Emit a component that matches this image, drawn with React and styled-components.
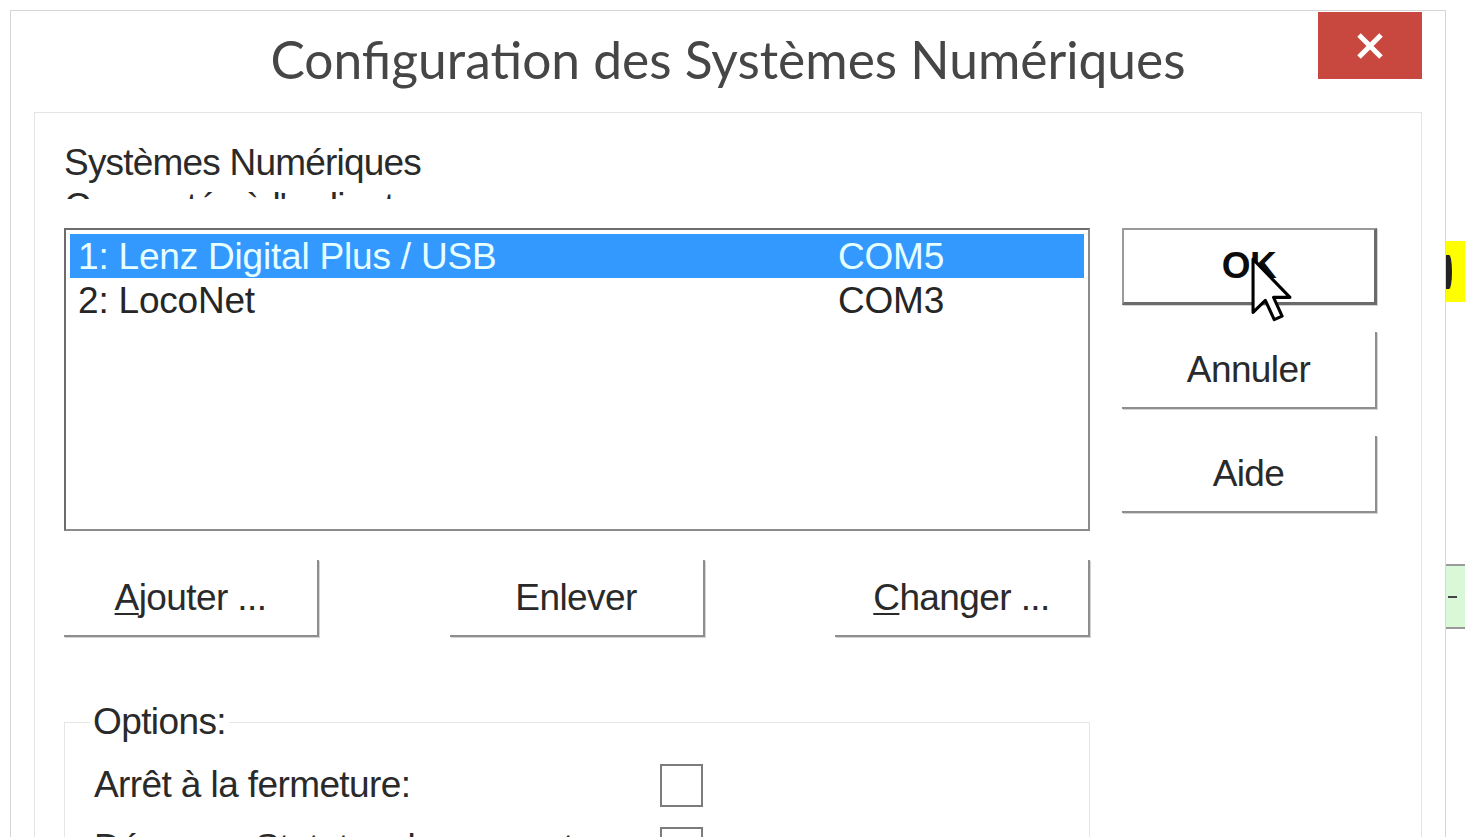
import React from 'react'
import styled, { createGlobalStyle } from 'styled-components'

const GlobalStyle = createGlobalStyle`
    html, body {
        margin: 0;
        padding: 0;
        background: #ffffff;
    }
    body {
        width: 1465px;
        height: 837px;
        overflow: hidden;
        font-family: "Liberation Sans", Arial, sans-serif;
        color: #1e1e1e;
    }
`

const rows = [
    { name: '1: Lenz Digital Plus / USB', port: 'COM5', selected: true },
    { name: '2: LocoNet', port: 'COM3' },
]

const options = [
    'Arrêt à la fermeture:',
    'Démarrer Statut au lancement:',
]

const App = () => {
    return (
        <Page>
            <GlobalStyle />
            <Window>
                <TitleBar>
                    <span />
                    <Title>Configuration des Systèmes Numériques</Title>
                    <CloseButton>
                        <svg width="28" height="26" viewBox="0 0 28 26">
                            <path d="M3 2 L25 24 M25 2 L3 24" stroke="#fff" strokeWidth="5" />
                        </svg>
                    </CloseButton>
                </TitleBar>

                <Panel>
                    <Caption>
                        Systèmes Numériques<br />
                        Connectés à l'ordinateur
                    </Caption>

                    <Body>
                        <div>
                            <ListBox>
                                {rows.map((r) => (
                                    <ListRow key={r.name} $selected={r.selected}>
                                        <span>{r.name}</span>
                                        <span>{r.port}</span>
                                    </ListRow>
                                ))}
                            </ListBox>

                            <ButtonRow>
                                <Button><u>A</u>jouter ...</Button>
                                <Button>Enlever</Button>
                                <Button><u>C</u>hanger ...</Button>
                            </ButtonRow>

                            <Group>
                                <Legend>Options:</Legend>
                                <OptionList>
                                    {options.map((o) => (
                                        <OptionRow key={o}>
                                            <span>{o}</span>
                                            <CheckBox />
                                        </OptionRow>
                                    ))}
                                </OptionList>
                            </Group>
                        </div>

                        <SideButtons>
                            <Button $default>OK</Button>
                            <Button>Annuler</Button>
                            <Button>Aide</Button>
                        </SideButtons>
                    </Body>
                </Panel>
            </Window>

            <Strip>
                <YellowTag><span /></YellowTag>
                <GreenTag><span /></GreenTag>
            </Strip>

            <Cursor width="41" height="65" viewBox="0 0 12 19">
                <path
                    d="M0.6 0.6 L0.6 16.2 L4.2 12.7 L6.8 18.3 L9.1 17.3 L6.6 11.8 L11.4 11.8 Z"
                    fill="#fff"
                    stroke="#000"
                    strokeWidth="0.9"
                    strokeLinejoin="round"
                />
            </Cursor>
        </Page>
    )
}

export default App

const Page = styled.div`
    position: relative;
    display: flex;
    align-items: flex-start;
    width: 1465px;
    height: 837px;
    padding: 10px 0 0 10px;
    box-sizing: border-box;
    overflow: hidden;
`

const Window = styled.div`
    flex-shrink: 0;
    width: 1436px;
    height: 900px;
    border: 1px solid #d6d6d6;
    box-sizing: border-box;
    background: #fff;
    display: flex;
    flex-direction: column;
`

const TitleBar = styled.div`
    display: grid;
    grid-template-columns: 1fr auto 1fr;
    height: 101px;
    padding: 0 23px;
    flex-shrink: 0;
`

const Title = styled.div`
    margin-top: 18px;
    font-family: Lato, "Open Sans", sans-serif;
    font-size: 51.5px;
    line-height: 60px;
    color: #464646;
    white-space: nowrap;
`

const CloseButton = styled.div`
    justify-self: end;
    margin-top: 1px;
    width: 104px;
    height: 67px;
    background: #c8473f;
    display: flex;
    align-items: center;
    justify-content: center;
`

const Panel = styled.div`
    flex: 1;
    margin: 0 23px;
    border: 1px solid #e4e4e4;
    border-bottom: none;
    padding: 28px 44px 0 29px;
`

const Caption = styled.div`
    height: 58px;
    overflow: hidden;
    font-size: 37px;
    line-height: 44px;
    letter-spacing: -0.8px;
    color: #2a2a2a;
`

const Body = styled.div`
    display: grid;
    grid-template-columns: 1026px 255px;
    column-gap: 32px;
    margin-top: 29px;
    align-items: start;
`

const ListBox = styled.div`
    height: 303px;
    box-sizing: border-box;
    border: 2px solid #8c8c8c;
    border-top-color: #6c6c6c;
    border-left-color: #6c6c6c;
    padding: 4px;
`

const ListRow = styled.div`
    display: grid;
    grid-template-columns: 760px 1fr;
    height: 44px;
    padding-left: 8px;
    font-size: 37px;
    line-height: 46px;
    letter-spacing: -0.2px;
    white-space: nowrap;
    background: ${(p) => (p.$selected ? '#3399ff' : 'transparent')};
    color: ${(p) => (p.$selected ? '#e6ffff' : '#262626')};
`

const ButtonRow = styled.div`
    display: flex;
    justify-content: space-between;
    margin-top: 29px;
`

const Button = styled.div`
    width: 255px;
    height: 77px;
    box-sizing: border-box;
    display: flex;
    align-items: center;
    justify-content: center;
    font-size: 37px;
    letter-spacing: -0.6px;
    color: ${(p) => (p.$default ? '#0c0c0c' : '#2a2a2a')};
    font-weight: ${(p) => (p.$default ? 700 : 400)};
    border-style: solid;
    border-color: ${(p) => (p.$default ? '#9a9a9a #6a6a6a #6a6a6a #9a9a9a' : 'transparent #8e8e8e #8e8e8e transparent')};
    border-width: ${(p) => (p.$default ? '2px 3px 3px 2px' : '0 2px 2px 0')};
    box-shadow: 1px 1px 0 #d4d4d4;

    u {
        text-decoration-thickness: 2px;
        text-underline-offset: 3px;
    }
`

const SideButtons = styled.div`
    display: flex;
    flex-direction: column;
    gap: 27px;
`

const Group = styled.fieldset`
    margin: 63px 0 0 0;
    padding: 0 0 0 25px;
    border: 1px solid #e6e6e6;
    min-width: 0;
    height: 200px;
`

const Legend = styled.legend`
    padding: 0 3px;
    font-size: 37px;
    line-height: 44px;
    letter-spacing: -0.6px;
    color: #2a2a2a;
`

const OptionList = styled.div`
    display: flex;
    flex-direction: column;
    gap: 19px;
    padding-top: 19px;
`

const OptionRow = styled.div`
    display: grid;
    grid-template-columns: 566px 43px;
    align-items: center;
    height: 44px;
    padding-left: 4px;
    font-size: 37px;
    line-height: 44px;
    letter-spacing: -0.6px;
    color: #2a2a2a;
    white-space: nowrap;
`

const CheckBox = styled.span`
    width: 43px;
    height: 43px;
    box-sizing: border-box;
    border: 2px solid #7c7c7c;
    background: #fff;
`

const Strip = styled.div`
    width: 19px;
    display: flex;
    flex-direction: column;
`

const YellowTag = styled.div`
    margin-top: 231px;
    height: 61px;
    background: #ffff00;
    display: flex;
    align-items: center;

    span {
        width: 6px;
        height: 34px;
        border-radius: 0 50% 50% 0;
        background: #222;
    }
`

const GreenTag = styled.div`
    margin-top: 262px;
    height: 65px;
    box-sizing: border-box;
    background: #d8f8d8;
    border-top: 2px solid #9a9a9a;
    border-bottom: 2px solid #9a9a9a;
    display: flex;
    align-items: center;

    span {
        width: 9px;
        height: 2px;
        margin-left: 2px;
        background: #444;
    }
`

const Cursor = styled.svg`
    position: absolute;
    left: 1251px;
    top: 257px;
`
